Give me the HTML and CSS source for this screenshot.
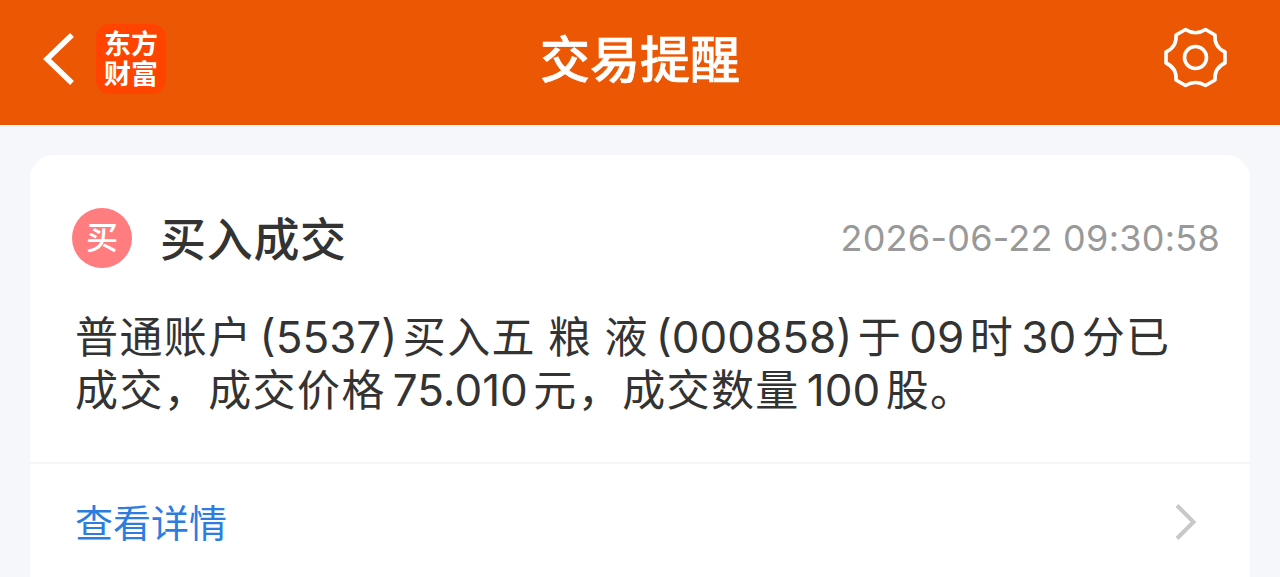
FILE: index.html
```html
<!DOCTYPE html>
<html lang="zh-CN">
<head>
  <meta charset="UTF-8">
  <meta name="viewport" content="width=device-width, initial-scale=1.0">
  <title>交易提醒</title>
  <link rel="stylesheet" href="styles.css">
</head>
<body>
  <header class="navbar">
    <div class="nav-left">
      <svg class="back" width="32" height="54" viewBox="0 0 32 54" fill="none">
        <path d="M29 3 L4 27 L29 51" stroke="#fff" stroke-width="5.500"/>
      </svg>
      <div class="logo">东方<br>财富</div>
    </div>
    <h1>交易提醒</h1>
    <svg class="settings" width="64" height="64" viewBox="0 0 64 64" fill="none" stroke="#fff" stroke-width="3.600" stroke-linejoin="round">
      <path d="M22.500 2.500 Q32.500 9 42.500 2.500 L52 8 Q51 20 62 25 L62 36 Q51 41 52 53 L42.500 58.500 Q32.500 52.500 22.500 58.500 L13 53 Q14 41 3 36 L3 25 Q14 20 13 8 Z"/>
      <circle cx="32.500" cy="30.500" r="11"/>
    </svg>
  </header>

  <main class="card">
    <div class="card-head">
      <span class="badge">买</span>
      <h2>买入成交</h2>
      <time>2026-06-22 09:30:58</time>
    </div>

    <div class="message">
      <p>普通账户<span class="num">(5537)</span>买入五<span class="gap"></span>粮<span class="gap"></span>液<span class="num">(000858)</span>于<span class="num">09</span>时<span class="num">30</span>分已</p>
      <p>成交，成交价格<span class="num">75.010</span>元，成交数量<span class="num">100</span>股。</p>
    </div>

    <a class="card-foot">
      <span>查看详情</span>
      <svg width="24" height="38" viewBox="0 0 24 38" fill="none">
        <path d="M3 2.500 L19.500 19 L3 35.500" stroke="#c8c8c8" stroke-width="4"/>
      </svg>
    </a>
  </main>
</body>
</html>
```
FILE: styles.css
```css
* {
  box-sizing: border-box;
}

body {
  margin: 0;
  height: 577px;
  overflow: hidden;
  display: flex;
  flex-direction: column;
  font-family: Inter, "Noto Sans CJK SC", sans-serif;
  color: #333;
  background: #f5f7fa;
}

h1, h2, p {
  margin: 0;
}

/* Top bar */
.navbar {
  flex: none;
  height: 125px;
  padding: 0 53px 8px 43px;
  display: grid;
  grid-template-columns: 1fr auto 1fr;
  align-items: center;
  color: #fff;
  background: #eb5703;
}

.nav-left {
  display: flex;
  align-items: center;
  gap: 21px;
}

.logo {
  width: 70px;
  height: 70px;
  padding-top: 6px;
  border-radius: 14px;
  background: #ff4400;
  font-size: 27px;
  font-weight: 700;
  line-height: 30px;
  text-align: center;
}

.navbar h1 {
  font-size: 50px;
  font-weight: 500;
  line-height: 60px;
  -webkit-text-stroke: 0.6px #fff;
  transform: translate(5px, 1px);
}

.settings {
  justify-self: end;
}

/* Notification card */
.card {
  flex: 1;
  margin: 30px 30px 0;
  border-radius: 24px 24px 0 0;
  background: #fff;
}

.card-head {
  height: 166px;
  padding: 0 30px 0 42px;
  display: flex;
  align-items: center;
}

.badge {
  width: 60px;
  height: 60px;
  border-radius: 50%;
  color: #fff;
  background: #ff7d7f;
  font-size: 32px;
  font-weight: 500;
  line-height: 59px;
  text-align: center;
}

.card-head h2 {
  margin-left: 28px;
  padding-bottom: 5px;
  font-size: 46px;
  font-weight: 500;
  letter-spacing: 0.7px;
}

.card-head time {
  margin-left: auto;
  color: #999;
  font-size: 36px;
  letter-spacing: 0.25px;
}

.message {
  height: 151px;
  margin-top: -10px;
  padding: 0 45px;
  font-size: 43px;
  letter-spacing: 1.4px;
  line-height: 53px;
  white-space: nowrap;
}

.message .num {
  margin: 0 5.5px 0 7px;
  font-size: 44px;
  letter-spacing: 0;
  line-height: 1;
}

.message .gap {
  display: inline-block;
  width: 12px;
}

.card-foot {
  height: 118px;
  padding: 0 52px 0 45px;
  display: flex;
  align-items: center;
  justify-content: space-between;
  border-top: 2px solid #f5f5f7;
  color: #2d7de0;
  font-size: 38px;
}

.card-foot span {
  padding-bottom: 4px;
}
```
